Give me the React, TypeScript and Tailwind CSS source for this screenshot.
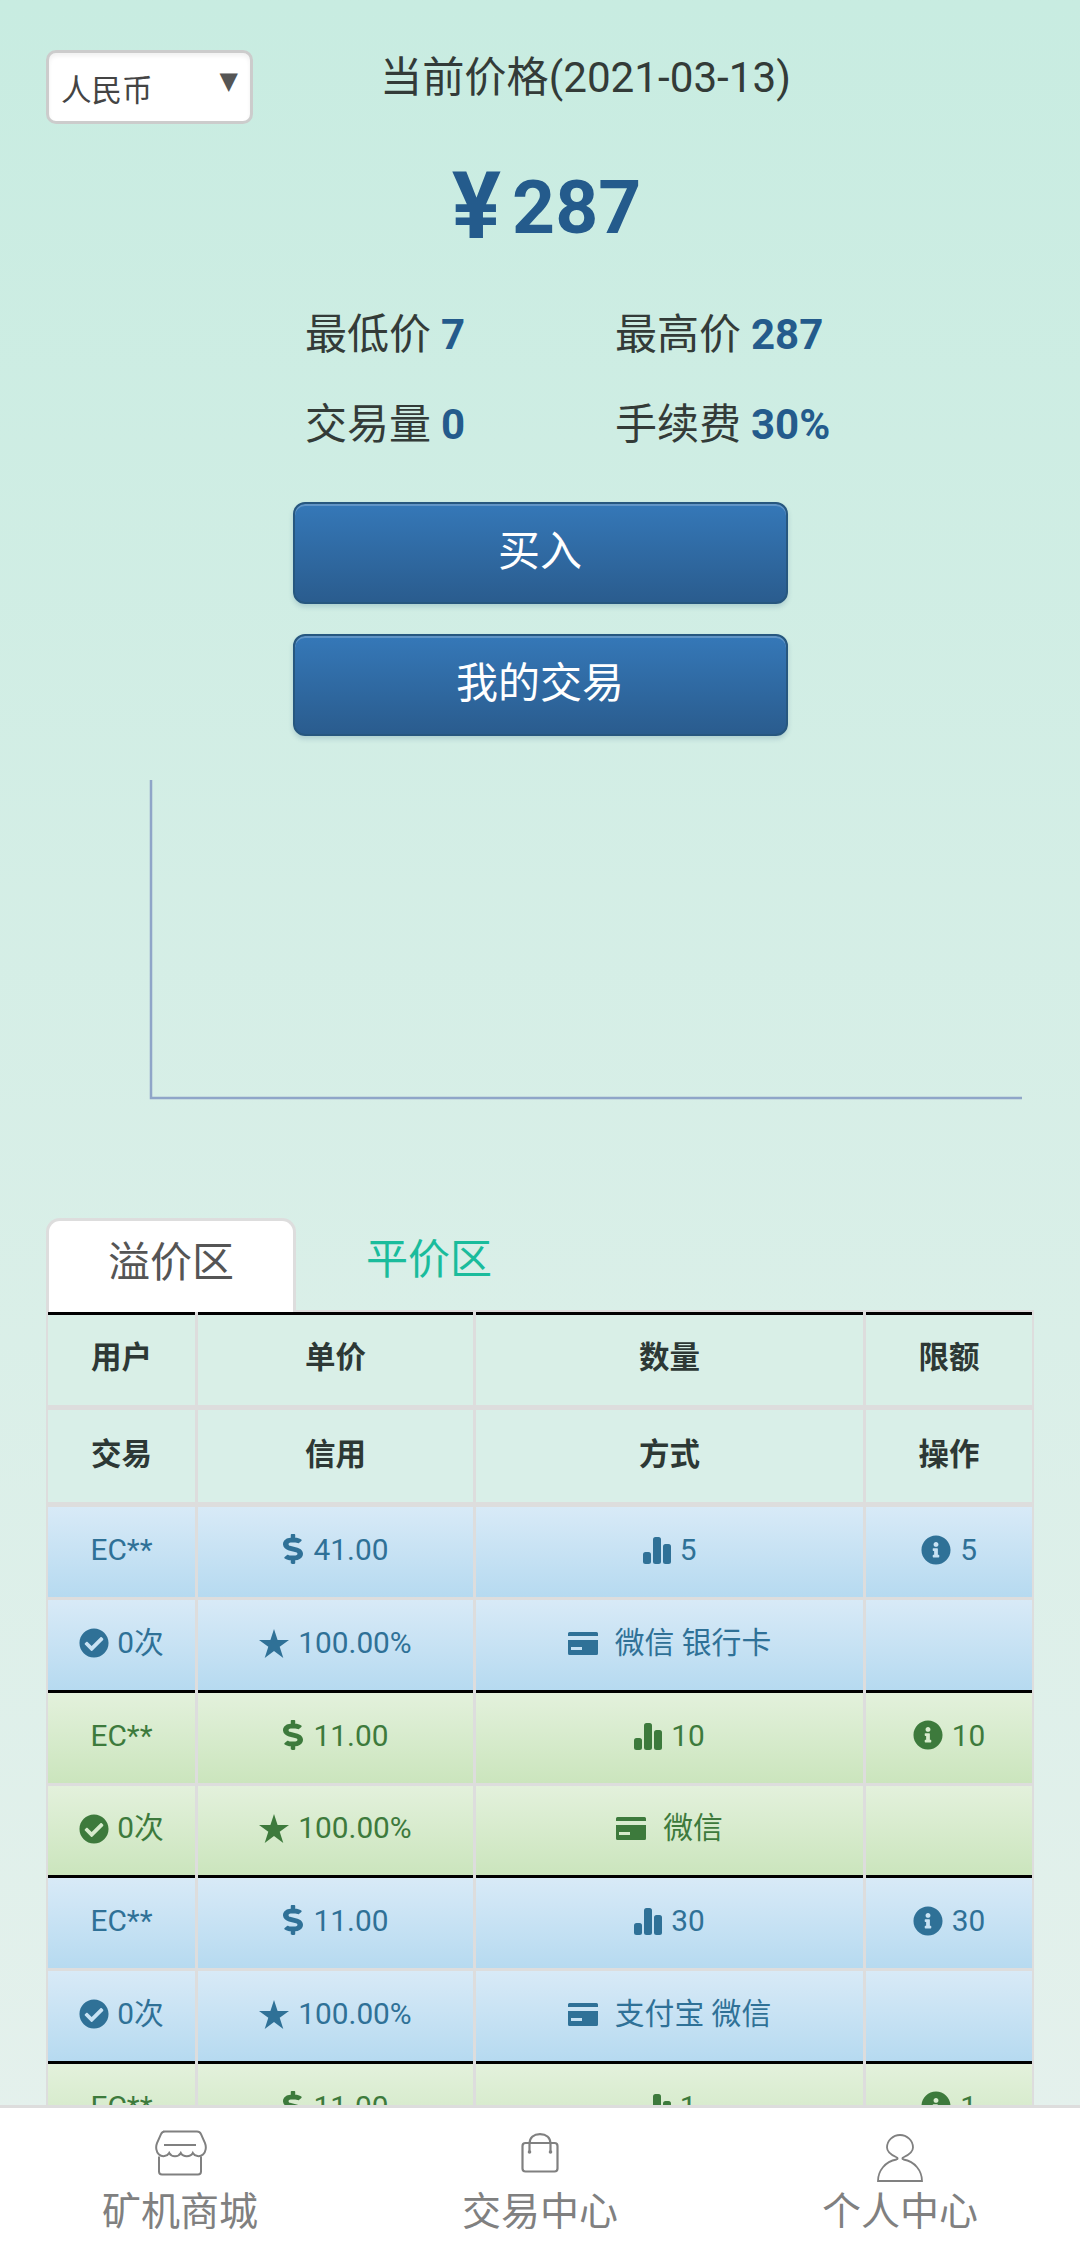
import { FaCheckCircle, FaDollarSign, FaInfoCircle } from "react-icons/fa";

type Tone = "blue" | "green";

interface Offer {
  tone: Tone;
  price: string;
  amount: string;
  limit: string;
  pay: string;
}

const offers: Offer[] = [
  { tone: "blue", price: "41.00", amount: "5", limit: "5", pay: "微信 银行卡" },
  { tone: "green", price: "11.00", amount: "10", limit: "10", pay: "微信" },
  { tone: "blue", price: "11.00", amount: "30", limit: "30", pay: "支付宝 微信" },
  { tone: "green", price: "11.00", amount: "1", limit: "1", pay: "微信" },
];

const toneClass: Record<Tone, string> = {
  blue: "bg-gradient-to-b from-[#d8eaf7] to-[#b6daf0] text-[#2f7197]",
  green: "bg-gradient-to-b from-[#e3f1dc] to-[#cbe5bd] text-[#3d7a3c]",
};

const columns = "grid grid-cols-[147px_275px_387px_166px] gap-x-[3px]";

function BarsIcon() {
  return (
    <svg viewBox="0 0 28 27" className="h-[27px] w-[28px] fill-current">
      <rect x="0" y="15" width="8" height="12" rx="2.5" />
      <rect x="10" y="0" width="8" height="27" rx="2.5" />
      <rect x="20" y="7" width="8" height="20" rx="2.5" />
    </svg>
  );
}

function CardIcon() {
  return (
    <svg viewBox="0 0 30 23" className="h-[23px] w-[30px] fill-current">
      <path
        fillRule="evenodd"
        d="M0 1.5A1.5 1.5 0 0 1 1.5 0h27A1.5 1.5 0 0 1 30 1.5V4H0V1.5ZM0 8h30v13.5a1.5 1.5 0 0 1-1.5 1.500h-27A1.5 1.5 0 0 1 0 21.5V8Zm3 7v3h11v-3H3Z"
      />
    </svg>
  );
}

function StarIcon() {
  return (
    <svg viewBox="0 0 30 29" className="h-[29px] w-[30px] fill-current">
      <path d="M15 0l3.600 10.900H30l-9.300 6.800 3.600 11.300L15 22l-9.300 7 3.600-11.300L0 10.900h11.400Z" />
    </svg>
  );
}

function StoreIcon() {
  return (
    <svg viewBox="0 0 54 46" className="h-[46px] w-[54px] fill-none stroke-[#808080] stroke-[2]">
      <path d="M10 1.5h34c2 0 3.200.9 4 2.600l4 9c1.600 4 .8 9-2 11.400-3 2.600-8 2.200-10.200-1.600-2.400 4.400-9.600 4.400-12 0-2.400 4.400-9.200 4.400-11.600 0-2.200 3.800-7.200 4.200-10.200 1.600-2.800-2.400-3.600-7.400-2-11.400l4-9c.8-1.700 2-2.600 4-2.600Z" />
      <path d="M6 26.500v15c0 2 1.200 3 3 3h36c1.800 0 3-1 3-3v-15" />
      <path d="M11 15h32" />
    </svg>
  );
}

function BagIcon() {
  return (
    <svg viewBox="0 0 38 40" className="h-[40px] w-[38px] fill-none stroke-[#808080] stroke-[2.2]">
      <rect x="1.5" y="10" width="35" height="28.5" rx="3" />
      <path d="M8.500 19V11C8.500 4.500 13 1.200 19 1.200S29.500 4.500 29.500 11v8" />
      <circle cx="8.500" cy="19" r="1.800" className="fill-[#808080] stroke-none" />
      <circle cx="29.500" cy="19" r="1.800" className="fill-[#808080] stroke-none" />
    </svg>
  );
}

function UserIcon() {
  return (
    <svg viewBox="0 0 48 48" className="h-[48px] w-[48px] fill-none stroke-[#808080] stroke-[1.800]">
      <path d="M2 47h44c0-10-7-19.500-18.500-21.500-1.500-.4-1.500-1.600 0-2.200C32 21.300 37 17.500 37 13.500 37 6.500 31 1 24 1S11 6.500 11 13.500c0 4 5 7.800 9.500 9.800 1.500.6 1.500 1.800 0 2.200C9 27.500 2 37 2 47Z" />
    </svg>
  );
}

function Stat({ label, value }: { label: string; value: string }) {
  return (
    <div className="flex h-[90px] items-center gap-[10px] text-[42px] text-[#333b38]">
      <span>{label}</span>
      <span className="font-bold text-[#245b8c]">{value}</span>
    </div>
  );
}

function ActionButton({ children }: { children: string }) {
  return (
    <button className="mx-auto flex h-[102px] w-[495px] items-center justify-center rounded-[12px] border-2 border-[#27577f] bg-gradient-to-b from-[#3578b8] to-[#2a5c8e] pb-[3px] text-[42px] text-white shadow-[inset_0_2px_0_rgba(255,255,255,0.22),0_3px_5px_rgba(40,90,130,0.2)]">
      {children}
    </button>
  );
}

function HeadRow({ cells, first }: { cells: string[]; first?: boolean }) {
  return (
    <div className={columns}>
      {cells.map((text) => (
        <div
          key={text}
          className={
            first
              ? "flex h-[93px] items-center justify-center border-t-[3px] border-black bg-[#d9efe7] pb-[5px] text-[30.500px] font-bold text-[#2d3835]"
              : "flex h-[92px] items-center justify-center bg-[#d9efe8] pb-[2px] text-[30.500px] font-bold text-[#2d3835]"
          }
        >
          {text}
        </div>
      ))}
    </div>
  );
}

function OfferGroup({ offer, first }: { offer: Offer; first: boolean }) {
  const top = `flex items-center justify-center pb-[3px] ${toneClass[offer.tone]} ${first ? "h-[90px]" : "h-[93px] border-t-[3px] border-black"}`;
  const bottom = `flex h-[89.5px] items-center justify-center pb-[3px] ${toneClass[offer.tone]}`;
  return (
    <div className="flex flex-col gap-y-[3px]">
      <div className={columns}>
        <div className={top}>EC**</div>
        <div className={`${top} gap-[11px]`}>
          <FaDollarSign preserveAspectRatio="none" className="-mt-[3px] h-[30px] w-[20px]" />
          <span>{offer.price}</span>
        </div>
        <div className={`${top} gap-[9px]`}>
          <BarsIcon />
          <span>{offer.amount}</span>
        </div>
        <div className={`${top} gap-[9px]`}>
          <FaInfoCircle className="-mt-[2px] text-[30px]" />
          <span>{offer.limit}</span>
        </div>
      </div>
      <div className={columns}>
        <div className={`${bottom} gap-[8px]`}>
          <FaCheckCircle className="text-[30px]" />
          <span>0次</span>
        </div>
        <div className={`${bottom} gap-[9px]`}>
          <StarIcon />
          <span>100.00%</span>
        </div>
        <div className={`${bottom} gap-[17px]`}>
          <CardIcon />
          <span>{offer.pay}</span>
        </div>
        <div className={bottom} />
      </div>
    </div>
  );
}

function NavItem({ icon, top, label }: { icon: React.ReactNode; top: string; label: string }) {
  return (
    <div className="flex flex-col items-center">
      <div className={`h-[82px] ${top}`}>{icon}</div>
      <span className="text-[39px] leading-[44px] text-[#808080]">{label}</span>
    </div>
  );
}

export default function App() {
  return (
    <div className="flex h-[2255px] w-[1080px] flex-col overflow-hidden bg-gradient-to-b from-[#c8ece1] to-[#e6f1ed] font-[Roboto,'Noto_Sans_CJK_SC',sans-serif]">
      <main className="min-h-0 flex-1 overflow-hidden pt-[50px]">
        <section className="flex items-start pl-[46px]">
          <div className="relative flex h-[74px] w-[207px] items-center rounded-[10px] border-[3px] border-[#cccccc] bg-white pl-[12px] pt-[8px] text-[30.500px] text-[#444444] shadow-[inset_0_3px_4px_rgba(0,0,0,0.06)]">
            人民币
            <span className="absolute right-[12px] top-[14px] font-['DejaVu_Sans',sans-serif] text-[24px] leading-[28px] text-[#555555]">▼</span>
          </div>
          <h1 className="ml-[127px] text-[42.200px] leading-[56px] font-normal text-[#333b38]">当前价格(2021-03-13)</h1>
        </section>

        <div className="mt-[43px] flex h-[80px] items-center justify-center pl-[13px] text-[75px] font-bold text-[#245b8c]">
          <span className="mr-[11px] text-[92px] leading-[80px]">¥</span>287
        </div>

        <div className="ml-[305px] mt-[42px] grid grid-cols-[310px_1fr]">
          <Stat label="最低价" value="7" />
          <Stat label="最高价" value="287" />
          <Stat label="交易量" value="0" />
          <Stat label="手续费" value="30%" />
        </div>

        <div className="mt-[33px] flex flex-col gap-[30px]">
          <ActionButton>买入</ActionButton>
          <ActionButton>我的交易</ActionButton>
        </div>

        <svg viewBox="0 0 1080 320" className="mt-[44px] block h-[320px] w-[1080px] fill-none stroke-[#8fa5c8] stroke-[2.500]">
          <path d="M151 0V318H1022" />
        </svg>

        <div className="ml-[46px] mt-[118px] flex h-[94px] w-[988px] border-b-2 border-[#dddddd] text-[42px] leading-none">
          <div className="-mb-[2px] flex w-[250px] items-center justify-center rounded-t-[14px] border-x-[3px] border-t-[3px] border-[#dddddd] bg-white pb-[8px] text-[#555555]">
            溢价区
          </div>
          <div className="flex w-[266px] items-center justify-center pb-[8px] text-[#1abc9c]">平价区</div>
        </div>

        <div className="ml-[46px] flex w-[988px] flex-col bg-[#dddddd] px-[2px] text-[29.800px]">
          <HeadRow first cells={["用户", "单价", "数量", "限额"]} />
          <div className="h-[5px]" />
          <HeadRow cells={["交易", "信用", "方式", "操作"]} />
          <div className="h-[5px]" />
          {offers.map((offer, index) => (
            <OfferGroup key={index} offer={offer} first={index === 0} />
          ))}
        </div>
      </main>

      <nav className="grid h-[150px] shrink-0 grid-cols-3 border-t-[3px] border-[#dddddd] bg-white">
        <NavItem icon={<StoreIcon />} top="pt-[22px]" label="矿机商城" />
        <NavItem icon={<BagIcon />} top="pt-[25px]" label="交易中心" />
        <NavItem icon={<UserIcon />} top="pt-[26px]" label="个人中心" />
      </nav>
    </div>
  );
}
